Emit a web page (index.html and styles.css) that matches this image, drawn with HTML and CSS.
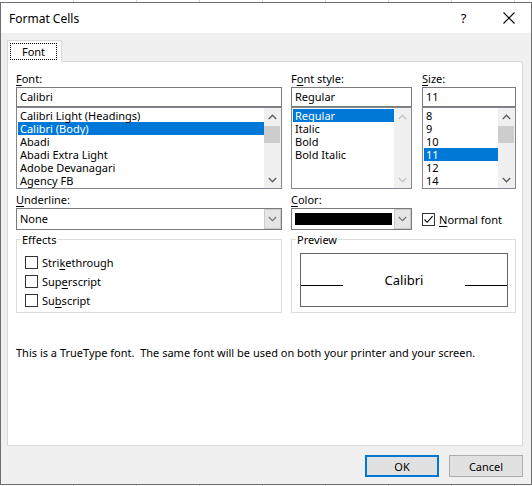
FILE: index.html
```html
<!DOCTYPE html>
<html>
<head>
<meta charset="utf-8">
<link rel="stylesheet" href="styles.css">
</head>
<body>
<div class="dialog">
  <div class="titlebar">
    <span class="title">Format Cells</span>
    <span class="tbtn help">?</span>
    <span class="tbtn close"><svg width="12" height="12" viewBox="0 0 12 12"><path d="M0.5 0.5 L11.5 11.5 M11.5 0.5 L0.5 11.5" stroke="#000" stroke-width="1.1" fill="none"/></svg></span>
  </div>
  <div class="body">
    <div class="tabs"><div class="tab"><span class="focus">Font</span></div></div>
    <div class="panel">
      <div class="top">
        <div class="col">
          <div class="label"><u>F</u>ont:</div>
          <div class="edit">Calibri</div>
          <div class="list">
            <div class="items">
              <div class="item">Calibri Light (Headings)</div>
              <div class="item sel">Calibri (Body)</div>
              <div class="item">Abadi</div>
              <div class="item">Abadi Extra Light</div>
              <div class="item">Adobe Devanagari</div>
              <div class="item">Agency FB</div>
            </div>
            <div class="sb">
              <div class="arrow"><svg width="9" height="6" viewBox="0 0 9 6"><path d="M0.8 5 L4.5 1.3 L8.2 5" stroke="#606060" stroke-width="1.4" fill="none"/></svg></div>
              <div class="thumb"></div>
              <div class="track"></div>
              <div class="arrow"><svg width="9" height="6" viewBox="0 0 9 6"><path d="M0.8 1 L4.5 4.7 L8.2 1" stroke="#606060" stroke-width="1.4" fill="none"/></svg></div>
            </div>
          </div>
        </div>
        <div class="col">
          <div class="label">F<u>o</u>nt style:</div>
          <div class="edit">Regular</div>
          <div class="list">
            <div class="items">
              <div class="item sel">Regular</div>
              <div class="item">Italic</div>
              <div class="item">Bold</div>
              <div class="item">Bold Italic</div>
            </div>
            <div class="sb">
              <div class="arrow"><svg width="9" height="6" viewBox="0 0 9 6"><path d="M0.8 5 L4.5 1.3 L8.2 5" stroke="#c4c4c4" stroke-width="1.4" fill="none"/></svg></div>
              <div class="track"></div>
              <div class="arrow"><svg width="9" height="6" viewBox="0 0 9 6"><path d="M0.8 1 L4.5 4.7 L8.2 1" stroke="#c4c4c4" stroke-width="1.4" fill="none"/></svg></div>
            </div>
          </div>
        </div>
        <div class="col col3">
          <div class="label"><u>S</u>ize:</div>
          <div class="edit">11</div>
          <div class="list">
            <div class="items">
              <div class="item">8</div>
              <div class="item">9</div>
              <div class="item">10</div>
              <div class="item sel">11</div>
              <div class="item">12</div>
              <div class="item">14</div>
            </div>
            <div class="sb">
              <div class="arrow"><svg width="9" height="6" viewBox="0 0 9 6"><path d="M0.8 5 L4.5 1.3 L8.2 5" stroke="#606060" stroke-width="1.4" fill="none"/></svg></div>
              <div class="thumb"></div>
              <div class="track"></div>
              <div class="arrow"><svg width="9" height="6" viewBox="0 0 9 6"><path d="M0.8 1 L4.5 4.7 L8.2 1" stroke="#606060" stroke-width="1.4" fill="none"/></svg></div>
            </div>
          </div>
        </div>
      </div>

      <div class="mid">
        <div class="col">
          <div class="label"><u>U</u>nderline:</div>
          <div class="combo">
            <span class="combo-text">None</span>
            <span class="dd"><svg width="9" height="6" viewBox="0 0 9 6"><path d="M0.8 1 L4.5 4.7 L8.2 1" stroke="#707070" stroke-width="1.1" fill="none"/></svg></span>
          </div>
        </div>
        <div class="col">
          <div class="label"><u>C</u>olor:</div>
          <div class="combo">
            <span class="swatch"></span>
            <span class="dd"><svg width="9" height="6" viewBox="0 0 9 6"><path d="M0.8 1 L4.5 4.7 L8.2 1" stroke="#707070" stroke-width="1.1" fill="none"/></svg></span>
          </div>
        </div>
        <div class="col col3">
          <div class="label">&nbsp;</div>
          <div class="check-row">
            <span class="box"><svg width="11" height="11" viewBox="0 0 11 11"><path d="M1.5 5.5 L4.2 8.3 L9.6 2.2" stroke="#000" stroke-width="1.1" fill="none"/></svg></span>
            <span><u>N</u>ormal font</span>
          </div>
        </div>
      </div>

      <div class="groups">
        <fieldset class="group effects">
          <legend>Effects</legend>
          <div class="effects-body">
            <div class="cb"><span class="box"></span><span>Stri<u>k</u>ethrough</span></div>
            <div class="cb"><span class="box"></span><span>Sup<u>e</u>rscript</span></div>
            <div class="cb"><span class="box"></span><span>Su<u>b</u>script</span></div>
          </div>
        </fieldset>
        <fieldset class="group preview">
          <legend>Preview</legend>
          <div class="preview-box">
            <span class="pline"></span>
            <span class="ptext">Calibri</span>
            <span class="pline"></span>
          </div>
        </fieldset>
      </div>

      <p class="info">This is a TrueType font.&nbsp; The same font will be used on both your printer and your screen.</p>
    </div>
    <div class="buttons">
      <button class="btn ok">OK</button>
      <button class="btn">Cancel</button>
    </div>
  </div>
</div>
</body>
</html>
```
FILE: styles.css
```css
* { box-sizing: border-box; }
html, body { margin: 0; }
body {
  width: 532px;
  height: 486px;
  overflow: hidden;
  padding-top: 2px;
  background: #fff repeating-linear-gradient(90deg, transparent 0 62px, #d4d4d4 62px 63px);
  background-position: 11px 0;
  font-family: "Noto Sans", sans-serif;
  font-size: 11px;
  color: #000;
}
u { text-decoration-thickness: 1px; text-underline-offset: 2px; }

.dialog {
  width: 532px;
  height: 483px;
  border: 1px solid #6e6e6e;
  background: #f0f0f0;
  display: flex;
  flex-direction: column;
}

.titlebar {
  height: 30px;
  background: #fff;
  display: flex;
  align-items: center;
  padding-left: 8px;
}
.title { flex: 1; font-size: 12px; }
.tbtn {
  width: 45px;
  height: 30px;
  display: flex;
  align-items: center;
  justify-content: center;
  font-size: 13px;
}

.body {
  flex: 1;
  padding: 7px 8px 0 6px;
  display: flex;
  flex-direction: column;
}
.tabs { display: flex; }
.tab {
  width: 55px;
  height: 22px;
  border: 1px solid #d9d9d9;
  border-bottom: none;
  background: #fff;
  margin-bottom: -1px;
  position: relative;
  z-index: 1;
  padding: 2px 0 0 2px;
}
.focus {
  display: block;
  width: 47px;
  height: 17px;
  border: 1px dotted #000;
  text-align: center;
  line-height: 15px;
}

.panel {
  height: 385px;
  border: 1px solid #d9d9d9;
  background: #fff;
  padding: 8px 0 0 8px;
}

.top, .mid {
  display: grid;
  grid-template-columns: 266px 121px 95px;
  column-gap: 9px;
}
.col3 { margin-left: 1px; }
.label { height: 17px; line-height: 17px; white-space: nowrap; }
.edit {
  height: 20px;
  border: 1px solid #7a7a7a;
  padding-left: 3px;
  line-height: 18px;
}
.list {
  height: 82px;
  border: 1px solid #828790;
  display: flex;
}
.items { flex: 1; padding: 1px 0 0 1px; min-width: 0; }
.item {
  height: 13px;
  line-height: 13px;
  padding-left: 2px;
  white-space: nowrap;
}
.item.sel { background: #0078d7; color: #fff; }
.sb {
  width: 17px;
  background: #f0f0f0;
  display: flex;
  flex-direction: column;
}
.arrow {
  height: 17px;
  display: flex;
  align-items: center;
  justify-content: center;
}
.thumb { height: 17px; margin: 1px 1px 0 0; background: #cdcdcd; }
.track { flex: 1; }

.mid { margin-top: 2px; }
.combo {
  height: 22px;
  border: 1px solid #7a7a7a;
  display: flex;
  align-items: stretch;
}
.combo-text { flex: 1; padding-left: 3px; line-height: 20px; }
.swatch { width: 97px; margin: 4px 0 4px 3px; background: #000; }
.combo .swatch + .dd { margin-left: auto; }
.dd {
  width: 17px;
  background: #e5e5e5;
  border: 1px solid #cccccc;
  display: flex;
  align-items: center;
  justify-content: center;
}
.check-row {
  height: 22px;
  display: flex;
  align-items: center;
  gap: 4px;
}
.box {
  width: 13px;
  height: 13px;
  border: 1px solid #333;
  background: #fff;
  display: inline-flex;
  align-items: center;
  justify-content: center;
  flex: none;
}

.groups {
  display: grid;
  grid-template-columns: 266px 225px;
  column-gap: 9px;
  margin-top: 3px;
}
.group {
  margin: 0;
  padding: 0;
  min-width: 0;
  height: 80px;
  border: 1px solid #dcdcdc;
}
.group legend {
  margin-left: 4px;
  padding: 0 1px;
  line-height: 13px;
}
.effects-body { padding: 7px 0 0 8px; }
.cb {
  height: 19px;
  display: flex;
  align-items: center;
  gap: 4px;
}
.preview-box {
  margin: 7px 7px 0 8px;
  height: 54px;
  border: 1px solid #646464;
  display: flex;
  align-items: flex-start;
}
.pline { width: 42px; height: 1px; background: #000; margin-top: 31px; flex: none; }
.ptext {
  flex: 1;
  text-align: center;
  font-size: 13px;
  line-height: 16px;
  margin-top: 18px;
}

.info { margin: 32px 0 0; line-height: 15px; }

.buttons {
  display: flex;
  justify-content: flex-end;
  gap: 10px;
  margin-top: 9px;
}
.btn {
  width: 74px;
  height: 22px;
  border: 1px solid #adadad;
  background: #e1e1e1;
  font-family: "Noto Sans", sans-serif;
  font-size: 11px;
  color: #000;
  padding: 0;
}
.btn.ok { border: 2px solid #0078d7; }
```
